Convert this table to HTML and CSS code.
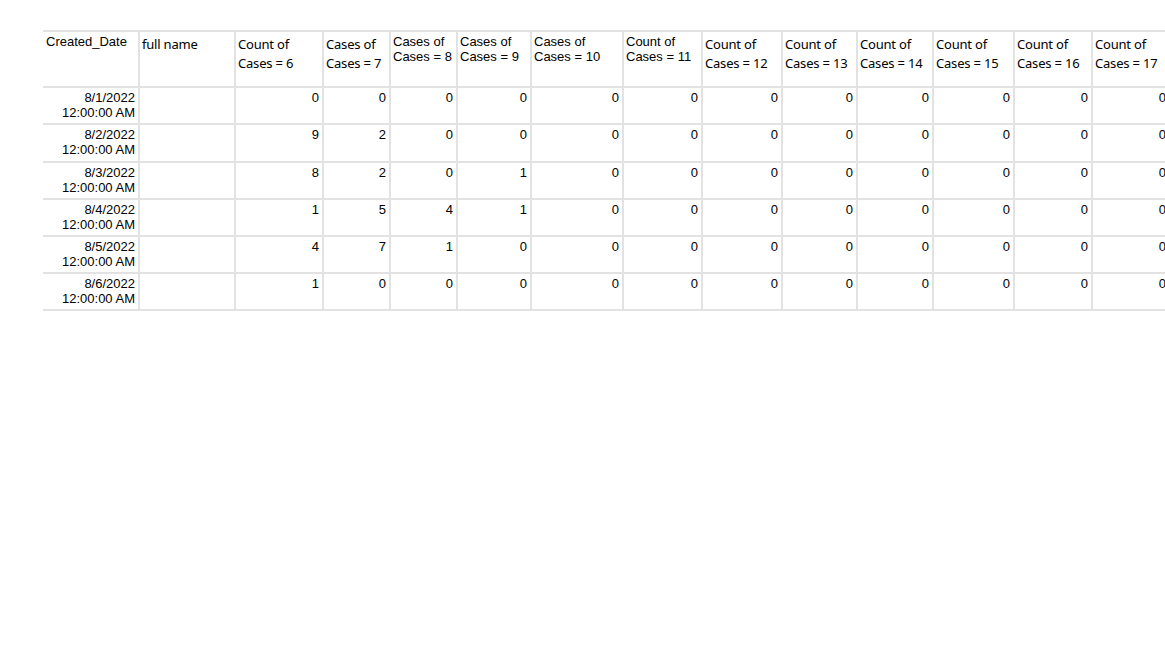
FILE: index.html
```html
<!DOCTYPE html>
<html lang="en">
<head>
<meta charset="utf-8">
<title>Cases report</title>
<link rel="stylesheet" href="styles.css">
</head>
<body>
<div class="sheet">
<table class="grid">
<colgroup>
<col class="c1"><col class="c2"><col class="c3"><col class="c4"><col class="c5"><col class="c6"><col class="c7"><col class="c8"><col class="c9"><col class="c10"><col class="c11"><col class="c12"><col class="c13"><col class="c14">
</colgroup>
<thead>
<tr>
<th class="h-arial first">Created_Date</th>
<th class="h-segoe">full name</th>
<th class="h-segoe">Count of<br>Cases = 6</th>
<th class="h-segoe">Cases of<br>Cases = 7</th>
<th class="h-arial">Cases of<br>Cases = 8</th>
<th class="h-arial">Cases of<br>Cases = 9</th>
<th class="h-arial">Cases of<br>Cases = 10</th>
<th class="h-arial">Count of<br>Cases = 11</th>
<th class="h-segoe">Count of<br>Cases = 12</th>
<th class="h-segoe">Count of<br>Cases = 13</th>
<th class="h-segoe">Count of<br>Cases = 14</th>
<th class="h-segoe">Count of<br>Cases = 15</th>
<th class="h-segoe">Count of<br>Cases = 16</th>
<th class="h-segoe">Count of<br>Cases = 17</th>
</tr>
</thead>
<tbody>
<tr><td class="first">8/1/2022<br>12:00:00 AM</td><td></td><td>0</td><td>0</td><td>0</td><td>0</td><td>0</td><td>0</td><td>0</td><td>0</td><td>0</td><td>0</td><td>0</td><td>0</td></tr>
<tr class="tall"><td class="first">8/2/2022<br>12:00:00 AM</td><td></td><td>9</td><td>2</td><td>0</td><td>0</td><td>0</td><td>0</td><td>0</td><td>0</td><td>0</td><td>0</td><td>0</td><td>0</td></tr>
<tr><td class="first">8/3/2022<br>12:00:00 AM</td><td></td><td>8</td><td>2</td><td>0</td><td>1</td><td>0</td><td>0</td><td>0</td><td>0</td><td>0</td><td>0</td><td>0</td><td>0</td></tr>
<tr><td class="first">8/4/2022<br>12:00:00 AM</td><td></td><td>1</td><td>5</td><td>4</td><td>1</td><td>0</td><td>0</td><td>0</td><td>0</td><td>0</td><td>0</td><td>0</td><td>0</td></tr>
<tr><td class="first">8/5/2022<br>12:00:00 AM</td><td></td><td>4</td><td>7</td><td>1</td><td>0</td><td>0</td><td>0</td><td>0</td><td>0</td><td>0</td><td>0</td><td>0</td><td>0</td></tr>
<tr><td class="first">8/6/2022<br>12:00:00 AM</td><td></td><td>1</td><td>0</td><td>0</td><td>0</td><td>0</td><td>0</td><td>0</td><td>0</td><td>0</td><td>0</td><td>0</td><td>0</td></tr>
</tbody>
</table>
</div>
</body>
</html>
```

FILE: styles.css
```css
html, body {
  margin: 0;
  padding: 0;
  background: #ffffff;
  overflow: hidden;
}

.sheet {
  padding: 30px 0 0 43px;
  width: 1200px;
}

.grid {
  border-collapse: collapse;
  table-layout: fixed;
  width: 1127px;
  color: #000000;
  font-family: "Liberation Sans", Arial, sans-serif;
  font-size: 13px;
}

.c1 { width: 96px; }
.c2 { width: 96px; }
.c3 { width: 88px; }
.c4 { width: 67px; }
.c5 { width: 67px; }
.c6 { width: 74px; }
.c7 { width: 92px; }
.c8 { width: 79px; }
.c9 { width: 80px; }
.c10 { width: 75px; }
.c11 { width: 76px; }
.c12 { width: 81px; }
.c13 { width: 78px; }
.c14 { width: 78px; }

.grid th,
.grid td {
  border: 2px solid #e2e2e2;
  padding: 0;
  overflow: hidden;
  white-space: nowrap;
}

.grid th.first,
.grid td.first {
  border-left: none;
}

.grid thead tr {
  height: 56px;
}

.grid th {
  vertical-align: top;
  text-align: left;
  font-weight: normal;
}

.grid th.h-arial {
  font-family: "Liberation Sans", Arial, sans-serif;
  font-size: 13px;
  line-height: 15px;
  padding: 2px 2px 0 2px;
}

.grid th.first {
  padding-left: 3px;
}

.grid th.h-segoe {
  font-family: "Noto Sans", "Open Sans", sans-serif;
  font-size: 13px;
  line-height: 19px;
  padding: 3px 2px 0 2px;
  letter-spacing: -0.2px;
}

.grid tbody tr {
  height: 37px;
}

.grid tbody tr.tall {
  height: 38px;
}

.grid td {
  vertical-align: top;
  text-align: right;
  line-height: 15px;
  padding: 2px 3px 0 2px;
}
```
